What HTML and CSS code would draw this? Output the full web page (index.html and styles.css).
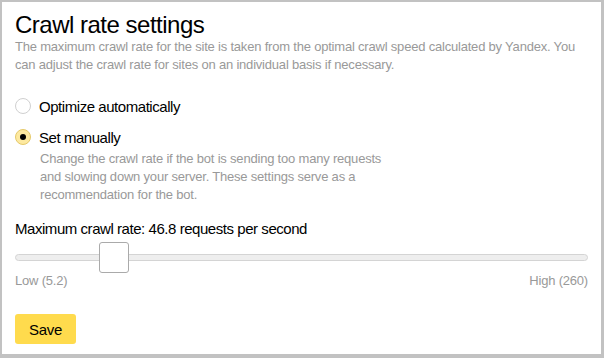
FILE: index.html
```html
<!DOCTYPE html>
<html lang="en">
<head>
    <meta charset="UTF-8">
    <meta name="viewport" content="width=device-width, initial-scale=1.0">
    <title>Crawl rate settings</title>
    <link rel="stylesheet" href="styles.css">
</head>
<body>

    <div class="panel">
        <h1 class="title">Crawl rate settings</h1>
        <p class="hint">The maximum crawl rate for the site is taken from the optimal crawl speed calculated by Yandex. You can adjust the crawl rate for sites on an individual basis if necessary.</p>

        <div class="options">
            <label class="radio">
                <span class="radio-box"></span>
                <span class="radio-text">Optimize automatically</span>
            </label>
            <label class="radio radio-checked">
                <span class="radio-box"><span class="radio-dot"></span></span>
                <span class="radio-text">Set manually</span>
            </label>
            <p class="radio-hint">Change the crawl rate if the bot is sending too many requests and slowing down your server. These settings serve as a recommendation for the bot.</p>
        </div>

        <div class="rate">
            <div class="rate-label">Maximum crawl rate: 46.8 requests per second</div>
            <div class="slider">
                <div class="slider-track"></div>
                <div class="slider-thumb" style="left: 84px"></div>
            </div>
            <div class="slider-legend">
                <span>Low (5.2)</span>
                <span>High (260)</span>
            </div>
        </div>

        <button class="save" type="button">Save</button>
    </div>

</body>
</html>
```

FILE: styles.css
```css
/* Base */
body {
    margin: 0;
    font-family: "Liberation Sans", Arial, sans-serif;
    background-color: #fff;
}

.panel {
    width: 604px;
    height: 358px;
    box-sizing: border-box;
    border-style: solid;
    border-color: #c2c2c2;
    border-width: 2px 3px 4px 2px;
    padding: 8px 13px 0 13px;
}

.title {
    margin: 0;
    font-size: 24px;
    font-weight: normal;
    line-height: 30px;
    letter-spacing: -0.5px;
    color: #000;
}

.hint {
    margin: -2px 0 0;
    font-size: 13px;
    line-height: 18px;
    letter-spacing: -0.2px;
    color: #999;
}

/* Radio buttons */
.options {
    margin-top: 22px;
}

.radio {
    display: flex;
    align-items: center;
    height: 20px;
    margin-bottom: 11px;
    cursor: pointer;
}

.radio-box {
    width: 14px;
    height: 14px;
    border: 1px solid #d0d0d0;
    border-radius: 50%;
    display: flex;
    align-items: center;
    justify-content: center;
    margin-right: 8px;
    background-color: #fff;
}

.radio-checked .radio-box {
    background-color: #fde9a0;
    border-color: #e5c96a;
}

.radio-dot {
    width: 6px;
    height: 6px;
    border-radius: 50%;
    background-color: #000;
}

.radio-text {
    font-size: 15px;
    letter-spacing: -0.45px;
    color: #000;
}

.radio-hint {
    margin: -8px 0 0 25px;
    width: 356px;
    font-size: 13px;
    line-height: 18px;
    letter-spacing: -0.2px;
    color: #999;
}

/* Slider */
.rate {
    margin-top: 15px;
}

.rate-label {
    font-size: 15px;
    line-height: 20px;
    letter-spacing: -0.45px;
    color: #000;
}

.slider {
    position: relative;
    height: 32px;
    margin-top: 3px;
}

.slider-track {
    position: absolute;
    left: 0;
    right: 0;
    top: 12px;
    height: 5px;
    border: 1px solid #d4d4d4;
    border-radius: 4px;
    background-color: #eee;
}

.slider-thumb {
    position: absolute;
    top: 0;
    width: 28px;
    height: 29px;
    border: 1px solid #aaa;
    border-radius: 3px;
    background-color: #fff;
}

.slider-legend {
    display: flex;
    justify-content: space-between;
    font-size: 13px;
    letter-spacing: -0.2px;
    color: #999;
    margin-top: -1px;
}

/* Button */
.save {
    margin-top: 26px;
    width: 61px;
    height: 30px;
    border: none;
    border-radius: 3px;
    background-color: #ffdb4d;
    font-family: "Liberation Sans", Arial, sans-serif;
    font-size: 15px;
    letter-spacing: -0.3px;
    color: #000;
}
```
